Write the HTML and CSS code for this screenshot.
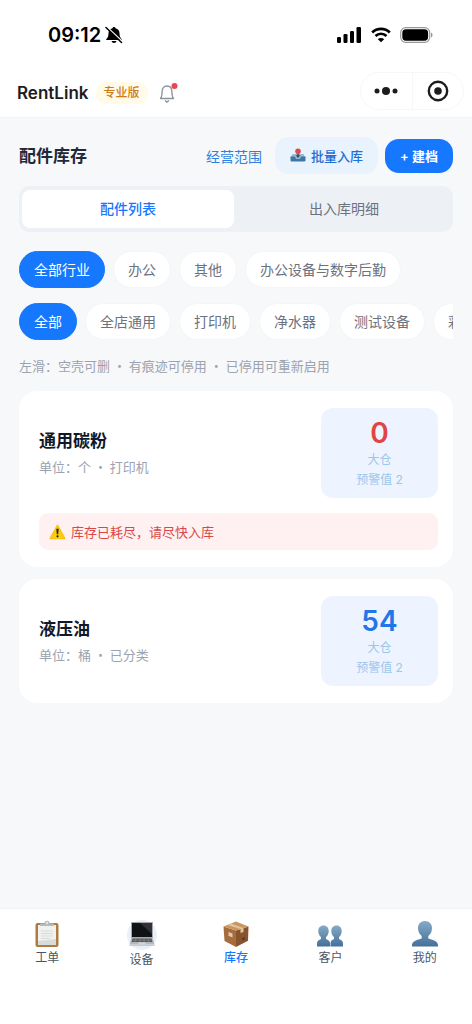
FILE: index.html
```html
<!DOCTYPE html>
<html lang="zh-CN">

<head>
    <meta charset="UTF-8">
    <meta name="viewport" content="width=device-width, initial-scale=1.0">
    <title>RentLink 配件库存</title>
    <link rel="stylesheet" href="styles.css">
</head>

<body>

    <header class="header">
        <div class="status-bar">
            <div class="status-time">
                <span>09:12</span>
                <svg width="18" height="18" viewBox="0 0 18 18">
                    <path d="M9 1c.9 0 1.400.6 1.500 1.300 2.600.7 4 2.500 4 5 0 3.200.7 4.200 2.300 5.900v.8H1.200v-.8c1.600-1.700 2.300-2.700 2.300-5.900 0-2.500 1.400-4.300 4-5C7.600 1.600 8.100 1 9 1zM6.500 15h5c-.3 1.300-1.200 2-2.500 2s-2.200-.7-2.500-2z" fill="#000" />
                    <path d="M2.500 1.500L17 15" stroke="#fff" stroke-width="1.200" />
                    <path d="M1 1.500l15.500 15" stroke="#000" stroke-width="1.500" stroke-linecap="round" />
                </svg>
            </div>
            <div class="status-icons">
                <svg width="25" height="16" viewBox="0 0 25 16">
                    <rect x="0" y="10" width="4" height="6" rx="1.200" />
                    <rect x="6.500" y="7" width="4" height="9" rx="1.200" />
                    <rect x="13" y="4" width="4" height="12" rx="1.200" />
                    <rect x="19.500" y="0" width="4.500" height="16" rx="1.200" />
                </svg>
                <svg width="20" height="16" viewBox="0 0 20 16">
                    <path d="M1.200 5.500a12.500 12.500 0 0 1 17.600 0M4.500 9a7.800 7.800 0 0 1 11 0" fill="none" stroke="#000" stroke-width="2.700" />
                    <path d="M10 15.300l-3.200-3.100a4.600 4.600 0 0 1 6.400 0z" />
                </svg>
                <svg width="33" height="16" viewBox="0 0 33 16">
                    <rect x=".7" y=".7" width="29" height="14.600" rx="5" fill="#fff" stroke="#999" stroke-width="1.200" />
                    <rect x="2.300" y="2.300" width="25.800" height="11.400" rx="3.600" />
                    <path d="M31 5.500c2 .8 2 4.200 0 5z" fill="#999" />
                </svg>
            </div>
        </div>
        <div class="nav-bar">
            <div class="brand">
                <span class="brand-name">RentLink</span>
                <span class="brand-badge">专业版</span>
                <button class="notice" aria-label="消息通知">
                    <svg width="20" height="22" viewBox="0 0 20 22">
                        <path d="M2.500 16.500c1.300-1.500 1.600-3.200 1.600-6.700C4.100 6 6 4 9 4s4.900 2 4.900 5.800c0 3.500.3 5.200 1.600 6.700z" fill="none" stroke="#8b929e" stroke-width="1.300" stroke-linejoin="round" />
                        <path d="M7 18.500L9 20l2-1.500" fill="none" stroke="#8b929e" stroke-width="1.400" />
                        <circle cx="16.500" cy="4" r="3" fill="#e5484d" />
                    </svg>
                </button>
            </div>
            <div class="capsule">
                <button aria-label="更多">
                    <svg width="24" height="10" viewBox="0 0 24 10">
                        <circle cx="3" cy="5" r="2.500" />
                        <circle cx="12" cy="5" r="4" />
                        <circle cx="21" cy="5" r="2.500" />
                    </svg>
                </button>
                <button aria-label="关闭">
                    <svg width="22" height="22" viewBox="0 0 22 22">
                        <circle cx="11" cy="11" r="9.200" fill="none" stroke="#1c1c1e" stroke-width="2.400" />
                        <circle cx="11" cy="11" r="3.800" />
                    </svg>
                </button>
            </div>
        </div>
    </header>

    <main class="main">
        <div class="page-head">
            <h1 class="page-title">配件库存</h1>
            <a class="scope-link" href="#scope">经营范围</a>
            <button class="btn btn-light">
                <svg width="16" height="16" viewBox="0 0 16 16">
                    <path d="M2.500 6h11l2 4H.5z" fill="#9bbbd0" />
                    <path d="M.5 8.500h4.200l1.300 2h4l1.300-2h4.200V12c0 1-.5 1.500-1.500 1.500H2c-1 0-1.500-.5-1.500-1.500z" fill="#3c78a6" />
                    <path d="M8 10L5.500 7.300h1.700V4h1.600v3.300h1.700z" fill="#35516b" />
                    <circle cx="8" cy="3.300" r="2.800" fill="#e9474b" />
                </svg>
                批量入库
            </button>
            <button class="btn btn-primary">+ 建档</button>
        </div>

        <div class="segment">
            <button class="segment-item active">配件列表</button>
            <button class="segment-item">出入库明细</button>
        </div>

        <div class="chips">
            <button class="chip active">全部行业</button>
            <button class="chip">办公</button>
            <button class="chip">其他</button>
            <button class="chip">办公设备与数字后勤</button>
        </div>
        <div class="chips">
            <button class="chip active">全部</button>
            <button class="chip">全店通用</button>
            <button class="chip">打印机</button>
            <button class="chip">净水器</button>
            <button class="chip">测试设备</button>
            <button class="chip">彩色</button>
        </div>

        <p class="hint">左滑：空壳可删 · 有痕迹可停用 · 已停用可重新启用</p>

        <div class="card">
            <div class="card-row">
                <div class="card-info">
                    <h2 class="card-title">通用碳粉</h2>
                    <div class="card-desc">单位：个 · 打印机</div>
                </div>
                <div class="stock">
                    <div class="stock-num empty">0</div>
                    <div class="stock-text">大仓</div>
                    <div class="stock-text">预警值 2</div>
                </div>
            </div>
            <div class="alert">
                <svg width="17" height="16" viewBox="0 0 17 16">
                    <path d="M8.500 1.500L15.700 14.500H1.300z" fill="#fccb13" stroke="#f8c510" stroke-width="1.600" stroke-linejoin="round" />
                    <path d="M7.300 4.700h2.400L9.200 10.300H7.800z" fill="#29231a" />
                    <circle cx="8.500" cy="12.300" r="1.100" fill="#29231a" />
                </svg>
                库存已耗尽，请尽快入库
            </div>
        </div>

        <div class="card">
            <div class="card-row">
                <div class="card-info">
                    <h2 class="card-title">液压油</h2>
                    <div class="card-desc">单位：桶 · 已分类</div>
                </div>
                <div class="stock">
                    <div class="stock-num">54</div>
                    <div class="stock-text">大仓</div>
                    <div class="stock-text">预警值 2</div>
                </div>
            </div>
        </div>
    </main>

    <nav class="tab-bar">
        <a class="tab" href="#orders">
            <svg width="28" height="28" viewBox="0 0 28 28">
                <rect x="2.500" y="3" width="23" height="24" rx="2" fill="#ad7c43" />
                <path d="M5 5h18v20H5z" fill="#f1f2ee" />
                <path d="M5 21l18-2v6H5z" fill="#d9ddd9" />
                <path d="M8 11h12M8 13.500h12M8 16h12M8 18.500h9" stroke="#d8dbda" stroke-width="1" />
                <path d="M7 6V3.500h4.500C11.500 1.500 12.500.8 14 .8s2.500.7 2.500 2.700H21V6z" fill="#b7bbb9" />
                <circle cx="14" cy="3" r="1" fill="#f5f5f5" />
            </svg>
            <span>工单</span>
        </a>
        <a class="tab" href="#devices">
            <svg width="30" height="30" viewBox="0 0 30 30">
                <circle cx="15" cy="15" r="15" fill="#eaf0fa" />
                <path d="M4 2h22v16H4z" fill="#a5a8ad" />
                <path d="M5 3h20v14H5z" fill="#101214" />
                <path d="M13 3h12v11z" fill="#303235" />
                <path d="M4.500 18h21l2 6.500h-25z" fill="#b5b7bb" />
                <path d="M5.500 18.500h19l1 3.500h-21z" fill="#54575c" />
                <path d="M5.500 20.200h19M9 18.500L8 22M13 18.500v3.500M17 18.500v3.500M21 18.500l1 3.500" stroke="#96999e" stroke-width=".5" />
                <path d="M11.500 22.500h7l.5 2h-8z" fill="#d4d5d8" />
                <path d="M2.500 24.500h25V26h-25z" fill="#c8cacd" />
            </svg>
            <span>设备</span>
        </a>
        <a class="tab active" href="#stock">
            <svg width="28" height="28" viewBox="0 0 28 28">
                <path d="M1.500 6.500L14 10.500V27L2.500 21z" fill="#a66c3c" />
                <path d="M14 10.500L26.500 6.500l-.5 14.300L14 27z" fill="#87542e" />
                <path d="M1.500 6.500L14 1.500l12.500 5L14 10.500z" fill="#c99663" />
                <path d="M5.500 4.900L9 3.500l12.500 4.600v4l-3 1V9.100z" fill="#e3c39b" />
                <path d="M6.500 12l4 1.500v4l-4-1.700z" fill="#dcc9b3" />
                <path d="M20 18l3-1v2.500l-3 1z" fill="#633b20" />
            </svg>
            <span>库存</span>
        </a>
        <a class="tab" href="#customers">
            <svg width="28" height="28" viewBox="0 0 28 28">
                <defs>
                    <linearGradient id="person" x1="0" y1="0" x2="0" y2="1">
                        <stop offset="0" stop-color="#86a9c6" />
                        <stop offset="1" stop-color="#44709a" />
                    </linearGradient>
                </defs>
                <path d="M7.500 5.500c3.200 0 5.200 2.300 5.200 5.500 0 2.700-1.100 4.800-2.700 5.900v2c2 1 4 1.800 4 4.300V26.500H1V23.200c0-2.500 2-3.300 4-4.300v-2C3.400 15.800 2.300 13.700 2.300 11c0-3.200 2-5.500 5.200-5.500z" fill="url(#person)" />
                <path d="M20.500 5.500c3.200 0 5.200 2.300 5.200 5.500 0 2.700-1.100 4.800-2.700 5.900v2c2 1 4 1.800 4 4.300V26.500H14.500V23.200c0-2.500 1.500-3.300 3.500-4.300v-2c-1.600-1.100-2.700-3.200-2.700-5.900 0-3.200 2-5.500 5.200-5.500z" fill="url(#person)" />
            </svg>
            <span>客户</span>
        </a>
        <a class="tab" href="#mine">
            <svg width="28" height="28" viewBox="0 0 28 28">
                <path d="M14 1c4.300 0 7 2.900 7 7 0 3.600-1.500 6.400-3.700 7.900v2.500c4 1.300 9.700 2.300 9.700 6.600v1.500H1V25c0-4.300 5.700-5.300 9.700-6.600v-2.500C8.500 14.400 7 11.600 7 8c0-4.100 2.700-7 7-7z" fill="url(#person)" />
            </svg>
            <span>我的</span>
        </a>
    </nav>

</body>

</html>
```
FILE: styles.css
```css
* {
    box-sizing: border-box;
}

body {
    margin: 0;
    min-height: 100vh;
    display: flex;
    flex-direction: column;
    font-family: Inter, "Noto Sans CJK SC", sans-serif;
    font-size: 14px;
    color: #1f2937;
    background-color: #f6f8fa;
}

button {
    font-family: inherit;
    border: none;
    padding: 0;
    background: none;
    cursor: pointer;
    white-space: nowrap;
}

a {
    text-decoration: none;
}

svg {
    display: block;
    flex-shrink: 0;
}

/* 顶部 */
.header {
    background-color: #fff;
    border-bottom: 1px solid #f3f4f6;
}

.status-bar {
    display: flex;
    align-items: center;
    justify-content: space-between;
    height: 72px;
    padding: 0 39px 2px 48px;
}

.status-time {
    display: flex;
    align-items: center;
    gap: 4px;
    font-size: 20px;
    font-weight: 600;
    color: #000;
}

.status-icons {
    display: flex;
    align-items: center;
    gap: 9px;
}

.nav-bar {
    display: flex;
    justify-content: space-between;
    padding: 0 8px 7px 17px;
}

.brand {
    display: flex;
    align-items: center;
    padding-top: 4px;
}

.brand-name {
    font-size: 17px;
    font-weight: 600;
    color: #1c1c1e;
}

.brand-badge {
    margin: 0 10px 0 7px;
    padding: 0 8px;
    border-radius: 10px;
    font-size: 12px;
    line-height: 22px;
    font-weight: 500;
    color: #cf7a1c;
    background-color: #fffbe8;
}

.capsule {
    display: flex;
    width: 104px;
    height: 38px;
    border: 1px solid #f7f7f7;
    border-radius: 19px;
}

.capsule button {
    flex: 1;
    display: flex;
    align-items: center;
    justify-content: center;
}

.capsule button + button {
    border-left: 1px solid #f7f7f7;
}

.capsule svg {
    fill: #1c1c1e;
}

/* 内容 */
.main {
    flex: 1;
    padding: 19px 19px 24px;
}

.page-head {
    display: flex;
    align-items: center;
    margin-bottom: 12px;
}

.page-title {
    flex: 1;
    margin: 0;
    font-size: 17px;
    line-height: 24px;
    font-weight: 600;
}

.scope-link {
    margin-right: 13px;
    color: #2f7fe0;
}

.btn {
    display: flex;
    align-items: center;
    justify-content: center;
    font-size: 13px;
    font-weight: 500;
}

.btn-light {
    gap: 5px;
    height: 37px;
    margin-right: 7px;
    padding: 0 15px;
    border-radius: 14px;
    color: #1f6fd6;
    background-color: #e9f3fe;
}

.btn-primary {
    height: 34px;
    padding: 0 15px;
    border-radius: 14px;
    font-weight: 600;
    color: #fff;
    background-color: #1677ff;
}

.segment {
    display: flex;
    gap: 4px;
    height: 46px;
    margin-bottom: 19px;
    padding: 4px 3px;
    border-radius: 10px;
    background-color: #edf0f5;
}

.segment-item {
    flex: 1;
    padding-bottom: 2px;
    border-radius: 8px;
    font-size: 14px;
    color: #6b7280;
}

.segment-item.active {
    font-weight: 500;
    color: #1677ff;
    background-color: #fff;
}

.chips {
    display: flex;
    gap: 8px;
    margin-bottom: 15px;
    overflow: hidden;
}

.chip {
    flex-shrink: 0;
    height: 37px;
    padding: 0 14px 2px;
    border: 1px solid #f3f5f7;
    border-radius: 19px;
    font-size: 14px;
    color: #6b7280;
    background-color: #fff;
}

.chip.active {
    border-color: #1677ff;
    color: #fff;
    background-color: #1677ff;
}

.hint {
    margin: 0 0 14px;
    font-family: "Noto Sans CJK SC", sans-serif;
    font-size: 13px;
    line-height: 22px;
    color: #9ca3af;
}

/* 配件卡片 */
.card {
    margin-bottom: 12px;
    padding: 17px 15px 17px 20px;
    border-radius: 18px;
    background-color: #fff;
}

.card-row {
    display: flex;
    align-items: center;
    justify-content: space-between;
}

.card-title {
    margin: 0;
    font-size: 17px;
    line-height: 28px;
    font-weight: 600;
    color: #111827;
}

.card-desc {
    font-family: "Noto Sans CJK SC", sans-serif;
    font-size: 13px;
    line-height: 24px;
    color: #9ca3af;
}

.stock {
    width: 117px;
    padding: 8px;
    border-radius: 12px;
    text-align: center;
    background-color: #edf4ff;
}

.stock-num {
    font-size: 28px;
    line-height: 34px;
    font-weight: 600;
    color: #2277e8;
}

.stock-num.empty {
    color: #e04444;
}

.stock-text {
    font-size: 12px;
    line-height: 20px;
    color: #9cc6ec;
}

.alert {
    display: flex;
    align-items: center;
    gap: 5px;
    height: 37px;
    margin-top: 15px;
    padding: 0 10px;
    border-radius: 9px;
    font-size: 13px;
    color: #d94848;
    background-color: #fff1f1;
}

/* 底部导航 */
.tab-bar {
    display: flex;
    padding: 11px 0 54px;
    border-top: 1px solid #f1f3f6;
    background-color: #fff;
}

.tab {
    flex: 1;
    display: flex;
    flex-direction: column;
    align-items: center;
    font-size: 12px;
    line-height: 20px;
    color: #4b5563;
}

.tab.active {
    font-weight: 500;
    color: #1677ff;
}
```
